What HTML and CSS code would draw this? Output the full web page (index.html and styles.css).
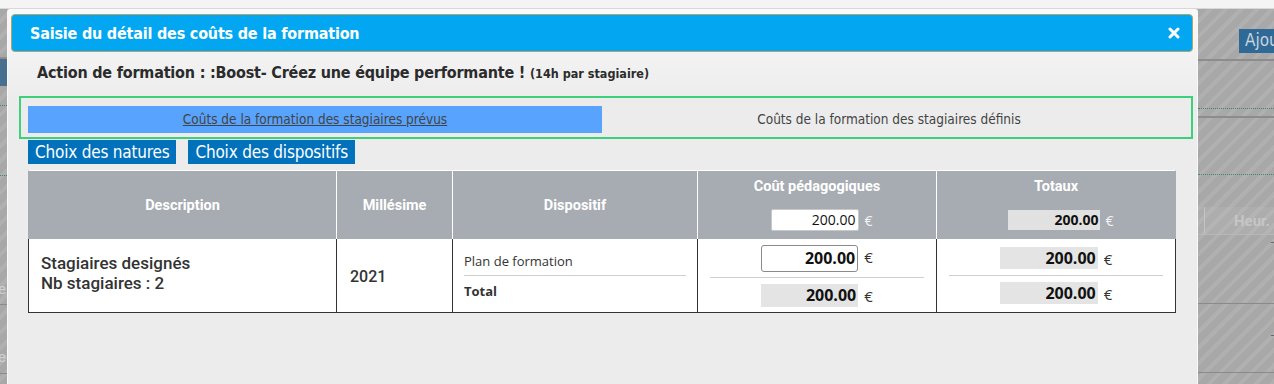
FILE: index.html
```html
<!DOCTYPE html>
<html lang="fr">
<head>
<meta charset="utf-8">
<title>Saisie du détail des coûts de la formation</title>
<link rel="stylesheet" href="styles.css">
</head>
<body>
<div class="page">
  <div class="top-strip"></div>
  <div class="backdrop">
    <div class="bg-col bg-left">
      <div class="bg-band b1"></div>
      <div class="bg-btn-left"></div>
      <div class="bg-band b2"></div>
      <div class="bg-dots"></div>
      <div class="bg-band b3"></div>
      <div class="bg-dots"></div>
      <div class="bg-band b4"></div>
      <div class="bg-letter l1">e</div>
      <div class="bg-line"></div>
      <div class="bg-letter l2">e</div>
      <div class="bg-line"></div>
    </div>
    <div class="bg-col bg-right">
      <div class="bg-top"><span class="bg-btn">Ajou</span></div>
      <div class="bg-line2"></div>
      <div class="bg-band r2"></div>
      <div class="bg-dots"></div>
      <div class="bg-line2 l2"></div>
      <div class="bg-band r3"></div>
      <div class="bg-dots"></div>
      <div class="bg-band r4"></div>
      <div class="bg-head"><span class="bg-head-sep"></span><span class="bg-head-txt">Heur.</span></div>
      <div class="bg-row"><span class="bg-dash d1">-</span></div>
      <div class="bg-line"></div>
      <div class="bg-row"><span class="bg-dash d2">-</span></div>
      <div class="bg-line"></div>
    </div>
  </div>

  <div class="dialog">
    <div class="dlg-header">
      <span class="dlg-title">Saisie du détail des coûts de la formation</span>
      <svg class="dlg-close" width="12" height="12" viewBox="0 0 12 12"><path d="M2 2 L10 10 M10 2 L2 10" stroke="#fff" stroke-width="3" stroke-linecap="round"/></svg>
    </div>
    <div class="dlg-sub">Action de formation : :Boost- Créez une équipe performante ! <small>(14h par stagiaire)</small></div>

    <div class="tabs-box">
      <div class="tab tab-active"><a href="#">Coûts de la formation des stagiaires prévus</a></div>
      <div class="tab tab-other">Coûts de la formation des stagiaires définis</div>
    </div>

    <div class="btn-row">
      <span class="btn">Choix des natures</span>
      <span class="btn">Choix des dispositifs</span>
    </div>

    <table class="costs">
      <colgroup>
        <col class="c1"><col class="c2"><col class="c3"><col class="c4"><col class="c5">
      </colgroup>
      <thead>
        <tr>
          <th>Description</th>
          <th>Millésime</th>
          <th>Dispositif</th>
          <th class="th-stack">
            <div class="th-label">Coût pédagogiques</div>
            <div class="th-val"><span class="in-head">200.00</span><span class="eur-h">€</span></div>
          </th>
          <th class="th-stack">
            <div class="th-label">Totaux</div>
            <div class="th-val"><span class="ro-head">200.00</span><span class="eur-h">€</span></div>
          </th>
        </tr>
      </thead>
      <tbody>
        <tr>
          <td class="td-desc">Stagiaires designés<br>Nb stagiaires : 2</td>
          <td class="td-year">2021</td>
          <td class="td-disp">
            <div class="disp-line">Plan de formation</div>
            <div class="disp-total">Total</div>
          </td>
          <td class="td-cost">
            <div class="cost-top"><span class="in-body">200.00</span><span class="eur">€</span></div>
            <div class="cost-bot"><span class="ro-body">200.00</span><span class="eur">€</span></div>
          </td>
          <td class="td-tot">
            <div class="tot-top"><span class="ro-tot">200.00</span><span class="eur">€</span></div>
            <div class="tot-bot"><span class="ro-tot">200.00</span><span class="eur">€</span></div>
          </td>
        </tr>
      </tbody>
    </table>
  </div>
</div>
</body>
</html>
```
FILE: styles.css
```css
* { box-sizing: border-box; }
html, body { margin: 0; padding: 0; }
body { width: 1274px; height: 384px; overflow: hidden; font-family: "DejaVu Sans Condensed", "DejaVu Sans", sans-serif; }

.page { position: relative; width: 1274px; height: 384px; background: #f4f4f4; }
.top-strip { height: 9px; background: #f4f4f4; border-bottom: 1px solid #d8d8d8; }

.backdrop {
  height: 375px;
  display: flex;
  justify-content: space-between;
  background: repeating-linear-gradient(135deg, #a8a8a8 0 7px, #b0b0b0 7px 11px);
}
.bg-col { display: flex; flex-direction: column; }
.bg-left { width: 7px; overflow: hidden; }
.bg-right { width: 76px; overflow: hidden; }

.bg-band.b1 { height: 50px; border-bottom: 2px solid #8c8c8c; }
.bg-btn-left { height: 27px; background: #476f90; }
.bg-band.b2 { height: 19px; }
.bg-dots { height: 1px; border-top: 1px dotted #3f8477; }
.bg-band.b3 { height: 69px; }
.bg-band.b4 { height: 85px; }
.bg-letter { color: #d0d0d0; font-family: Roboto, sans-serif; font-size: 15px; line-height: 36px; text-indent: -2px; }
.bg-letter.l1 { height: 43px; padding-top: 10px; }
.bg-letter.l2 { height: 68px; padding-top: 34px; }
.bg-line { height: 1px; background: #8a8a8a; }

.bg-top { height: 50px; padding: 20px 0 0 41px; white-space: nowrap; }
.bg-btn { display: inline-block; height: 24px; padding: 0 0 0 6px; background: #2f6a96; color: #c9d4de; font-size: 17px; line-height: 23px; white-space: nowrap; }
.bg-line2 { height: 2px; background: #8c8c8c; }
.bg-band.r2 { height: 47px; }
.bg-line2.l2 { margin-top: 7px; }
.bg-band.r3 { height: 56px; }
.bg-band.r4 { height: 32px; }
.bg-head { height: 28px; display: flex; background: rgba(255,255,255,0.06); border-bottom: 1px solid #b8b8b8; }
.bg-head-sep { width: 7px; border-right: 1px solid #c4c4c4; }
.bg-head-txt { padding-left: 29px; color: #c6c6c6; font-family: Roboto, sans-serif; font-weight: 700; font-size: 15px; line-height: 28px; }
.bg-row { height: 68px; position: relative; }
.bg-dash { position: absolute; right: 0; color: #555; font-size: 11px; line-height: 12px; }
.bg-dash.d1 { top: 1px; }
.bg-dash.d2 { top: 25px; }

/* dialog (modal overlay) */
.dialog {
  position: absolute;
  left: 7px; top: 9px;
  width: 1191px; height: 380px;
  border: 1px solid #f9f9f9;
  border-bottom: 0;
  border-radius: 3px 3px 0 0;
  background: linear-gradient(#f9f9f9, #ececec 90px, #ececec);
}
.dlg-header {
  margin: 4px 4px 0 3px;
  height: 38px;
  background: #03a7f1;
  border: 1px solid #b7a266;
  border-radius: 4px;
  display: flex;
  align-items: center;
  justify-content: space-between;
  padding: 0 12px 0 18px;
}
.dlg-title { color: #fff; font-weight: 700; font-size: 16px; letter-spacing: -0.2px; }
.dlg-close { display: block; }

.dlg-sub { margin: 10px 0 0 29px; height: 22px; line-height: 22px; font-weight: 700; font-size: 16px; color: #2b2b2b; letter-spacing: -0.2px; }
.dlg-sub small { font-size: 12.5px; letter-spacing: 0; }

.tabs-box {
  margin: 12px 4px 0 11px;
  border: 2px solid #3dd07a;
  padding: 8px 0 4px 7px;
  display: flex;
}
.tab { height: 27px; line-height: 27px; text-align: center; font-size: 13.5px; color: #444; width: 574px; }
.tab-active { background: #57a3fd; }
.tab-active a { color: #444; text-decoration: underline; }

.btn-row { margin: 1px 0 0 20px; display: flex; gap: 12px; }
.btn { height: 24px; padding: 0 7px; background: #0171bc; color: #fff; font-size: 17px; line-height: 24px; letter-spacing: -0.2px; }

.costs {
  margin: 6px 0 0 20px;
  width: 1148px;
  table-layout: fixed;
  border-collapse: separate;
  border-spacing: 0;
  font-family: Roboto, sans-serif;
}
.c1 { width: 309px; } .c2 { width: 116px; } .c3 { width: 245px; } .c4 { width: 239px; } .c5 { width: 239px; }
.costs th {
  height: 69px;
  background: #a7abb2;
  color: #fff;
  font-weight: 700;
  font-size: 14.5px;
  border-top: 1px solid #fff;
  border-right: 1px solid #fff;
  padding: 0;
  vertical-align: middle;
}
.costs th:first-child { border-left: 1px solid #a7abb2; }
.costs th:last-child { border-right: 1px solid #a7abb2; }
.th-stack { vertical-align: top !important; }
.th-label { height: 38px; padding-top: 7px; }
.th-val { display: flex; justify-content: center; align-items: center; gap: 5px; height: 22px; padding-left: 10px; }
.in-head { width: 88px; height: 22px; background: #fff; border: 1px solid #c8c8c8; border-radius: 2px; color: #111; font-family: "Open Sans", sans-serif; font-weight: 400; font-size: 14px; text-align: right; padding-right: 3px; line-height: 20px; }
.ro-head { width: 92px; height: 20px; background: #e1e1e1; color: #111; font-family: "Open Sans", sans-serif; font-weight: 700; font-size: 14px; text-align: right; padding-right: 2px; line-height: 20px; }
.eur-h { font-weight: 400; font-size: 14px; color: #f4f4f4; font-family: "Open Sans", sans-serif; }

.costs td {
  height: 74px;
  background: #fff;
  border-right: 1px solid #333;
  border-bottom: 1px solid #333;
  color: #333;
  padding: 0;
  vertical-align: middle;
}
.costs td:first-child { border-left: 1px solid #333; }
.td-desc { padding: 0 0 6px 12px !important; font-size: 17px; font-weight: 500; line-height: 20px; }
.td-year { padding: 2px 0 0 13px !important; font-size: 16px; font-weight: 500; }
.td-disp { vertical-align: top !important; padding: 0 11px !important; font-family: "Open Sans", sans-serif; font-size: 13px; color: #333; }
.disp-line { height: 37px; padding-top: 12px; border-bottom: 1px solid #cfcfcf; line-height: 20px; }
.disp-total { padding-top: 4px; font-weight: 700; line-height: 22px; }

.td-cost, .td-tot { vertical-align: top !important; padding: 0 12px !important; }
.cost-top { height: 39px; padding-top: 6px; border-bottom: 1px solid #cfcfcf; display: flex; justify-content: center; gap: 6px; align-items: flex-start; }
.cost-bot { padding-top: 6px; display: flex; justify-content: center; gap: 6px; align-items: flex-start; }
.in-body { width: 97px; height: 27px; border: 1px solid #8a8a8a; border-radius: 3px; font-family: "Open Sans", sans-serif; font-weight: 700; font-size: 16px; color: #111; text-align: right; padding-right: 2px; line-height: 25px; }
.ro-body { width: 97px; height: 23px; background: #e4e4e4; font-family: "Open Sans", sans-serif; font-weight: 700; font-size: 16px; color: #111; text-align: right; padding-right: 2px; line-height: 23px; }
.eur { font-family: "Open Sans", sans-serif; font-size: 15px; color: #333; line-height: 25px; }
.tot-top { height: 37px; padding-top: 8px; border-bottom: 1px solid #cfcfcf; display: flex; justify-content: center; gap: 6px; align-items: flex-start; }
.tot-bot { padding-top: 6px; display: flex; justify-content: center; gap: 6px; align-items: flex-start; }
.ro-tot { width: 98px; height: 22px; background: #e4e4e4; font-family: "Open Sans", sans-serif; font-weight: 700; font-size: 16px; color: #111; text-align: right; padding-right: 2px; line-height: 22px; }
```
